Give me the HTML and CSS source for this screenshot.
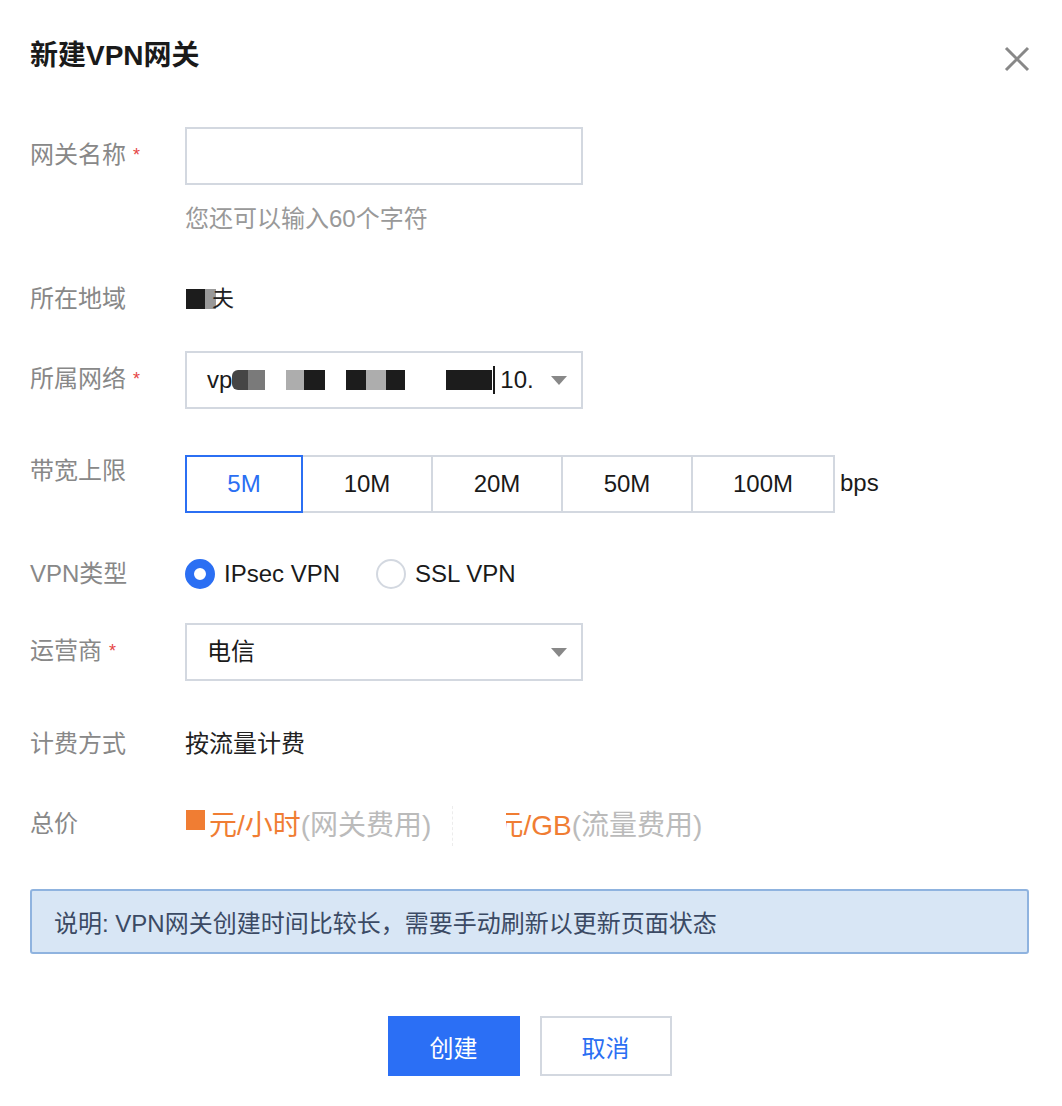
FILE: index.html
```html
<!DOCTYPE html>
<html>
<head>
    <meta charset="UTF-8">
    <title>新建VPN网关</title>
    <link rel="stylesheet" href="styles.css">
</head>
<body>
    <div class="dialog">
        <div class="header">
            <h1>新建VPN网关</h1>
            <svg class="close" width="26" height="26" viewBox="0 0 26 26">
                <path d="M2 2 L24 24 M24 2 L2 24" stroke="#888" stroke-width="3" fill="none"/>
            </svg>
        </div>

        <div class="row row-name">
            <div class="label">网关名称<span class="req">*</span></div>
            <div class="field">
                <input type="text" class="input">
            </div>
        </div>
        <div class="tip">您还可以输入60个字符</div>

        <div class="row row-region">
            <div class="label">所在地域</div>
            <div class="value">
                <span class="mask mask-black"></span><span class="mask mask-gray"></span><span class="region-char">夫</span>
            </div>
        </div>

        <div class="row row-vpc">
            <div class="label">所属网络<span class="req">*</span></div>
            <div class="select">
                <div class="select-text"><span>vp</span><span class="blk b-dark first"></span><span class="blk b-mid"></span><span class="blk b-light gap s18"></span><span class="blk b-black s21"></span><span class="blk b-black gap"></span><span class="blk b-light"></span><span class="blk b-black s19"></span><span class="blk b-black wide"></span><span class="bar"></span><span class="ip">10.</span></div>
                <span class="caret"></span>
            </div>
        </div>

        <div class="row row-bw">
            <div class="label top">带宽上限</div>
            <div class="seg">
                <div class="seg-item active w1">5M</div>
                <div class="seg-item w2">10M</div>
                <div class="seg-item w2">20M</div>
                <div class="seg-item w2">50M</div>
                <div class="seg-item w3">100M</div>
            </div>
            <div class="unit">bps</div>
        </div>

        <div class="row row-type">
            <div class="label">VPN类型</div>
            <div class="radios">
                <label class="radio"><span class="dot checked"></span>IPsec VPN</label>
                <label class="radio"><span class="dot"></span>SSL VPN</label>
            </div>
        </div>

        <div class="row row-isp">
            <div class="label">运营商<span class="req">*</span></div>
            <div class="select">
                <div class="select-text">电信</div>
                <span class="caret"></span>
            </div>
        </div>

        <div class="row row-bill">
            <div class="label">计费方式</div>
            <div class="value">按流量计费</div>
        </div>

        <div class="row row-price">
            <div class="label">总价</div>
            <div class="price">
                <span class="price-box"></span><span class="orange">元/小时</span><span class="muted">(网关费用)</span><span class="divider"></span><span class="cut"><span>元</span></span><span class="orange">/GB</span><span class="muted">(流量费用)</span>
            </div>
        </div>

        <div class="note">说明: VPN网关创建时间比较长，需要手动刷新以更新页面状态</div>

        <div class="actions">
            <button class="btn btn-primary">创建</button>
            <button class="btn btn-default">取消</button>
        </div>
    </div>
</body>
</html>
```

FILE: styles.css
```css
body {
    margin: 0;
    padding: 0;
    background-color: #fff;
    font-family: "Liberation Sans", "Noto Sans CJK SC", sans-serif;
    font-size: 24px;
    color: #222;
}

.dialog {
    width: 1000px;
    padding: 40px 32px 0 30px;
}

.header {
    display: flex;
    justify-content: space-between;
    align-items: center;
    height: 32px;
}

h1 {
    margin: 0;
    font-size: 28px;
    line-height: 32px;
    font-weight: bold;
    color: #1a1a1a;
}

.close {
    margin-top: 6px;
}

.row {
    display: flex;
    align-items: center;
}

.label {
    width: 155px;
    flex: none;
    color: #888;
    line-height: 32px;
}

.label.top {
    align-self: flex-start;
}

.req {
    color: #e54545;
    font-size: 18px;
    margin-left: 7px;
    position: relative;
    top: -2px;
}

.row-name { margin-top: 55px; }
.row-region { margin-top: 48px; }
.row-vpc { margin-top: 36px; }
.row-bw { margin-top: 46px; }
.row-type { margin-top: 45px; }
.row-isp { margin-top: 33px; }
.row-bill { margin-top: 47px; }
.row-price { margin-top: 48px; }

.input {
    width: 398px;
    height: 58px;
    box-sizing: border-box;
    border: 2px solid #d3d8e0;
    margin: 0;
    padding: 0 20px;
    font-size: 24px;
    outline: none;
}

.tip {
    margin-top: 18px;
    margin-left: 155px;
    color: #999;
    line-height: 32px;
}

.value {
    line-height: 32px;
    display: flex;
    align-items: center;
    color: #222;
}

.mask {
    display: inline-block;
    height: 20px;
}

.mask-black {
    width: 19px;
    margin-left: 1px;
    background: #1c1c1c;
}

.mask-gray {
    width: 11px;
    background: #999;
}

.region-char {
    font-size: 22px;
    margin-left: -4px;
}

.select {
    width: 398px;
    height: 58px;
    box-sizing: border-box;
    border: 2px solid #d3d8e0;
    display: flex;
    align-items: center;
    justify-content: space-between;
    padding: 0 14px 0 20px;
    flex: none;
}

.select-text {
    display: flex;
    align-items: center;
    white-space: nowrap;
    color: #1a1a1a;
    line-height: 32px;
}

.caret {
    width: 0;
    height: 0;
    border-left: 8px solid transparent;
    border-right: 8px solid transparent;
    border-top: 9px solid #888;
    flex: none;
}

.blk {
    display: inline-block;
    height: 20px;
    flex: none;
}

.blk.first {
    border-radius: 6px 0 0 6px;
}

.blk.gap { margin-left: 21px; }
.blk.wide { width: 46px; margin-left: 41px; }

.b-dark { width: 16px; background: #454545; }
.b-mid { width: 17px; background: #7a7a7a; }
.b-light { width: 20px; background: #adadad; }
.b-black { width: 20px; background: #1c1c1c; }
.blk.s18 { width: 18px; }
.blk.s21 { width: 21px; }
.blk.s19 { width: 19px; }

.bar {
    display: inline-block;
    width: 2px;
    height: 28px;
    background: #1a1a1a;
    margin-left: 1px;
    flex: none;
}

.ip {
    margin-left: 5px;
}

.seg {
    display: flex;
}

.seg-item {
    height: 58px;
    box-sizing: border-box;
    border: 2px solid #d3d8e0;
    margin-left: -2px;
    display: flex;
    align-items: center;
    justify-content: center;
    color: #1a1a1a;
    background: #fff;
}

.seg-item:first-child { margin-left: 0; }
.seg-item.w1 { width: 118px; }
.seg-item.w2 { width: 132px; }
.seg-item.w3 { width: 144px; }

.seg-item.active {
    border-color: #2b6ff3;
    color: #2b6ff3;
    position: relative;
    z-index: 1;
}

.unit {
    margin-left: 5px;
    align-self: flex-start;
    margin-top: 14px;
    color: #1a1a1a;
}

.radios {
    display: flex;
    align-items: center;
}

.radio {
    display: flex;
    align-items: center;
    margin-right: 36px;
    color: #1a1a1a;
    line-height: 32px;
}

.dot {
    width: 30px;
    height: 30px;
    box-sizing: border-box;
    border-radius: 50%;
    border: 2px solid #d3d8e0;
    margin-right: 9px;
}

.dot.checked {
    border: 9px solid #2b6ff3;
}

.price {
    display: flex;
    align-items: center;
    font-size: 28px;
    line-height: 32px;
    height: 32px;
    position: relative;
    top: 2px;
}

.price-box {
    display: inline-block;
    width: 19px;
    height: 20px;
    background: #f07d33;
    margin-left: 1px;
    margin-right: 4px;
    position: relative;
    top: -6px;
}

.orange { color: #f07d33; }
.muted { color: #bbb; }

.divider {
    display: inline-block;
    width: 0;
    height: 40px;
    margin-left: 21px;
    margin-right: 53px;
    border-left: 1px dashed #ececec;
}

.cut {
    display: inline-block;
    width: 17px;
    overflow: hidden;
    color: #f07d33;
    white-space: nowrap;
}

.cut span {
    display: inline-block;
    margin-left: -11px;
}

.note {
    margin-top: 49px;
    height: 65px;
    box-sizing: border-box;
    background: #d8e6f5;
    border: 2px solid #8fb3df;
    border-radius: 3px;
    padding: 0 22px;
    display: flex;
    align-items: center;
    color: #3b4a64;
    width: 999px;
}

.actions {
    display: flex;
    justify-content: center;
    gap: 20px;
    margin-top: 62px;
    margin-left: -30px;
    width: 1059px;
}

.btn {
    width: 132px;
    height: 60px;
    box-sizing: border-box;
    font-size: 24px;
    font-family: "Liberation Sans", "Noto Sans CJK SC", sans-serif;
    cursor: pointer;
    margin: 0;
}

.btn-primary {
    background: #2b6ff5;
    color: #fff;
    border: none;
}

.btn-default {
    background: #fff;
    color: #2b6ff3;
    border: 2px solid #d3d8e0;
}
```
